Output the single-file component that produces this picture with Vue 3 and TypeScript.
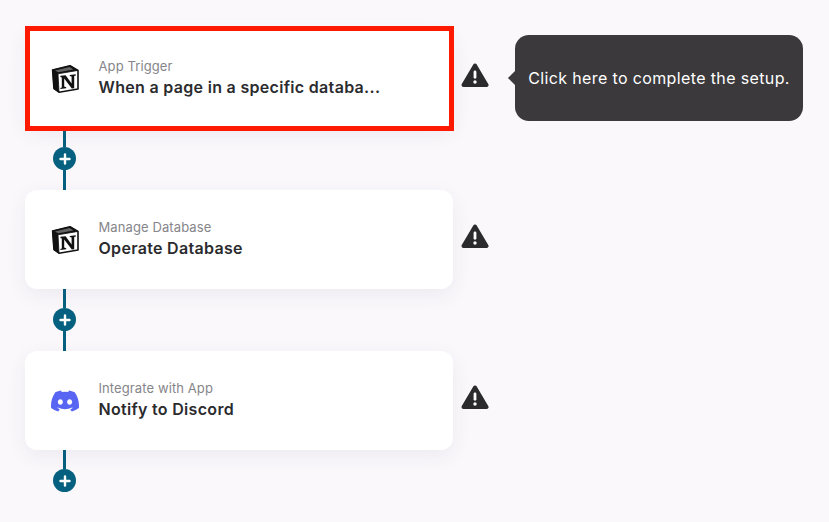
<script setup lang="ts">
interface Step { id: number; label: string; title: string; icon: 'notion' | 'discord'; selected?: boolean }
const steps: Step[] = [
  { id: 1, label: 'App Trigger', title: 'When a page in a specific databa...', icon: 'notion', selected: true },
  { id: 2, label: 'Manage Database', title: 'Operate Database', icon: 'notion' },
  { id: 3, label: 'Integrate with App', title: 'Notify to Discord', icon: 'discord' },
]
</script>

<template>
  <div class="page">
    <div v-for="s in steps" :key="s.id" class="step">
      <div class="row">
        <div class="card">
          <div v-if="s.selected" class="highlight"></div>
          <div class="icon">
            <svg v-if="s.icon === 'notion'" width="28" height="30" viewBox="0 0 28 30">
              <path d="M1.6 6 L19 1.8 L27 6.4 L27 25 L8 28.2 L3 24.6 Z" fill="#fff" stroke="#111" stroke-width="1.6" stroke-linejoin="round"/>
              <path d="M1.6 6 L7 9.8 L27 6.4 L19 1.8 Z M1.6 6 L3 24.6 L8 28.2 L7 9.8 Z" fill="#111" stroke="#111" stroke-width="0.8" stroke-linejoin="round"/>
              <path d="M4 6.4 L18.6 3 L22.4 5.4 L7.4 8.2 Z" fill="#fff" opacity="0.35"/>
              <path d="M9.4 11.8 L14.6 11.3 L20.6 19.6 L20.6 12.6 L18.8 12.1 L18.8 11 L24.8 10.3 L24.8 11.4 L23.2 11.9 L23.2 24.2 L20.8 24.6 L13.2 14.4 L13.2 22.6 L15.2 23.2 L15.2 24.3 L9.4 25 L9.4 24 L10.8 23.4 L10.8 13.4 L9.4 12.9 Z" fill="#111"/>
            </svg>
            <svg v-else width="28" height="22" viewBox="0 0 127.14 96.36">
              <path fill="#5865f2" d="M107.7 8.07A105.15 105.15 0 0 0 81.47 0a72.06 72.06 0 0 0-3.36 6.83 97.68 97.68 0 0 0-29.11 0A72.37 72.37 0 0 0 45.64 0a105.89 105.89 0 0 0-26.25 8.09C2.79 32.65-1.71 56.6.54 80.21a105.73 105.73 0 0 0 32.17 16.15 77.7 77.7 0 0 0 6.89-11.11 68.42 68.42 0 0 1-10.85-5.18c.91-.66 1.8-1.34 2.66-2a75.57 75.57 0 0 0 64.32 0c.87.71 1.76 1.39 2.66 2a68.68 68.68 0 0 1-10.87 5.19 77 77 0 0 0 6.89 11.1 105.25 105.25 0 0 0 32.19-16.14c2.64-27.38-4.51-51.11-18.9-72.15ZM42.45 65.69C36.18 65.69 31 60 31 53s5-12.74 11.43-12.74S54 46 53.89 53s-5.05 12.69-11.44 12.69Zm42.24 0C78.41 65.69 73.25 60 73.25 53s5-12.74 11.44-12.74S96.23 46 96.12 53s-5.04 12.69-11.43 12.69Z"/>
            </svg>
          </div>
          <div class="text">
            <div class="label">{{ s.label }}</div>
            <div class="title">{{ s.title }}</div>
          </div>
        </div>
        <svg class="warn" width="28" height="25" viewBox="0 0 28 25">
          <path d="M14 2.5 L25.5 22 L2.5 22 Z" fill="#2b2b2e" stroke="#2b2b2e" stroke-width="4" stroke-linejoin="round"/>
          <rect x="12.6" y="7.5" width="2.8" height="8.2" rx="1.4" fill="#fff"/>
          <circle cx="14" cy="19" r="1.7" fill="#fff"/>
        </svg>
        <div v-if="s.selected" class="tip">Click here to complete the setup.</div>
      </div>
      <div class="connector">
        <div class="line"></div>
        <div class="plus">
          <svg width="12" height="12" viewBox="0 0 12 12">
            <path d="M6 1.5 V10.5 M1.5 6 H10.5" stroke="#fff" stroke-width="2.4" stroke-linecap="round"/>
          </svg>
        </div>
        <div v-if="s.id !== 3" class="line lower"></div>
      </div>
    </div>
  </div>
</template>

<style scoped>
.page {
  width: 829px;
  height: 522px;
  box-sizing: border-box;
  padding: 29px 0 0 25px;
  background: #faf8fb;
  overflow: hidden;
  font-family: Inter, "Liberation Sans", sans-serif;
}
.row {
  display: flex;
  align-items: center;
  position: relative;
}
.card {
  position: relative;
  width: 428px;
  height: 99px;
  box-sizing: border-box;
  padding: 0 0 0 25px;
  display: flex;
  align-items: center;
  background: #fff;
  border-radius: 12px;
  box-shadow: 0 6px 20px rgba(60, 50, 80, 0.07);
}
.highlight {
  position: absolute;
  top: -3px;
  bottom: -3px;
  left: 0;
  right: -1px;
  border: 5px solid #fe1a00;
}
.icon {
  width: 29px;
  display: flex;
  justify-content: center;
}
.text {
  margin-left: 19.5px;
}
.label {
  font-size: 13px;
  line-height: 17px;
  letter-spacing: 0.1px;
  color: #85858a;
}
.title {
  font-size: 16px;
  font-weight: 600;
  line-height: 24px;
  letter-spacing: 0.31px;
  color: #2b2b2e;
}
.warn {
  margin-left: 8px;
  margin-top: -6px;
}
.tip {
  position: absolute;
  left: 490px;
  top: 6px;
  width: 288px;
  height: 86px;
  box-sizing: border-box;
  display: flex;
  align-items: center;
  justify-content: center;
  background: #3b393c;
  color: #fff;
  border-radius: 14px;
  font-size: 16px;
  letter-spacing: 0.37px;
  white-space: nowrap;
}
.tip::before {
  content: "";
  position: absolute;
  left: -5px;
  top: 38px;
  width: 10px;
  height: 10px;
  background: #3b393c;
  transform: rotate(45deg);
}
.connector {
  width: 24px;
  margin-left: 27.5px;
  display: flex;
  flex-direction: column;
  align-items: center;
}
.line {
  width: 3px;
  height: 19px;
  background: #06607f;
}
.line.lower {
  height: 20px;
}
.plus {
  width: 23px;
  height: 23px;
  border-radius: 50%;
  background: #06607f;
  display: flex;
  align-items: center;
  justify-content: center;
}
</style>
